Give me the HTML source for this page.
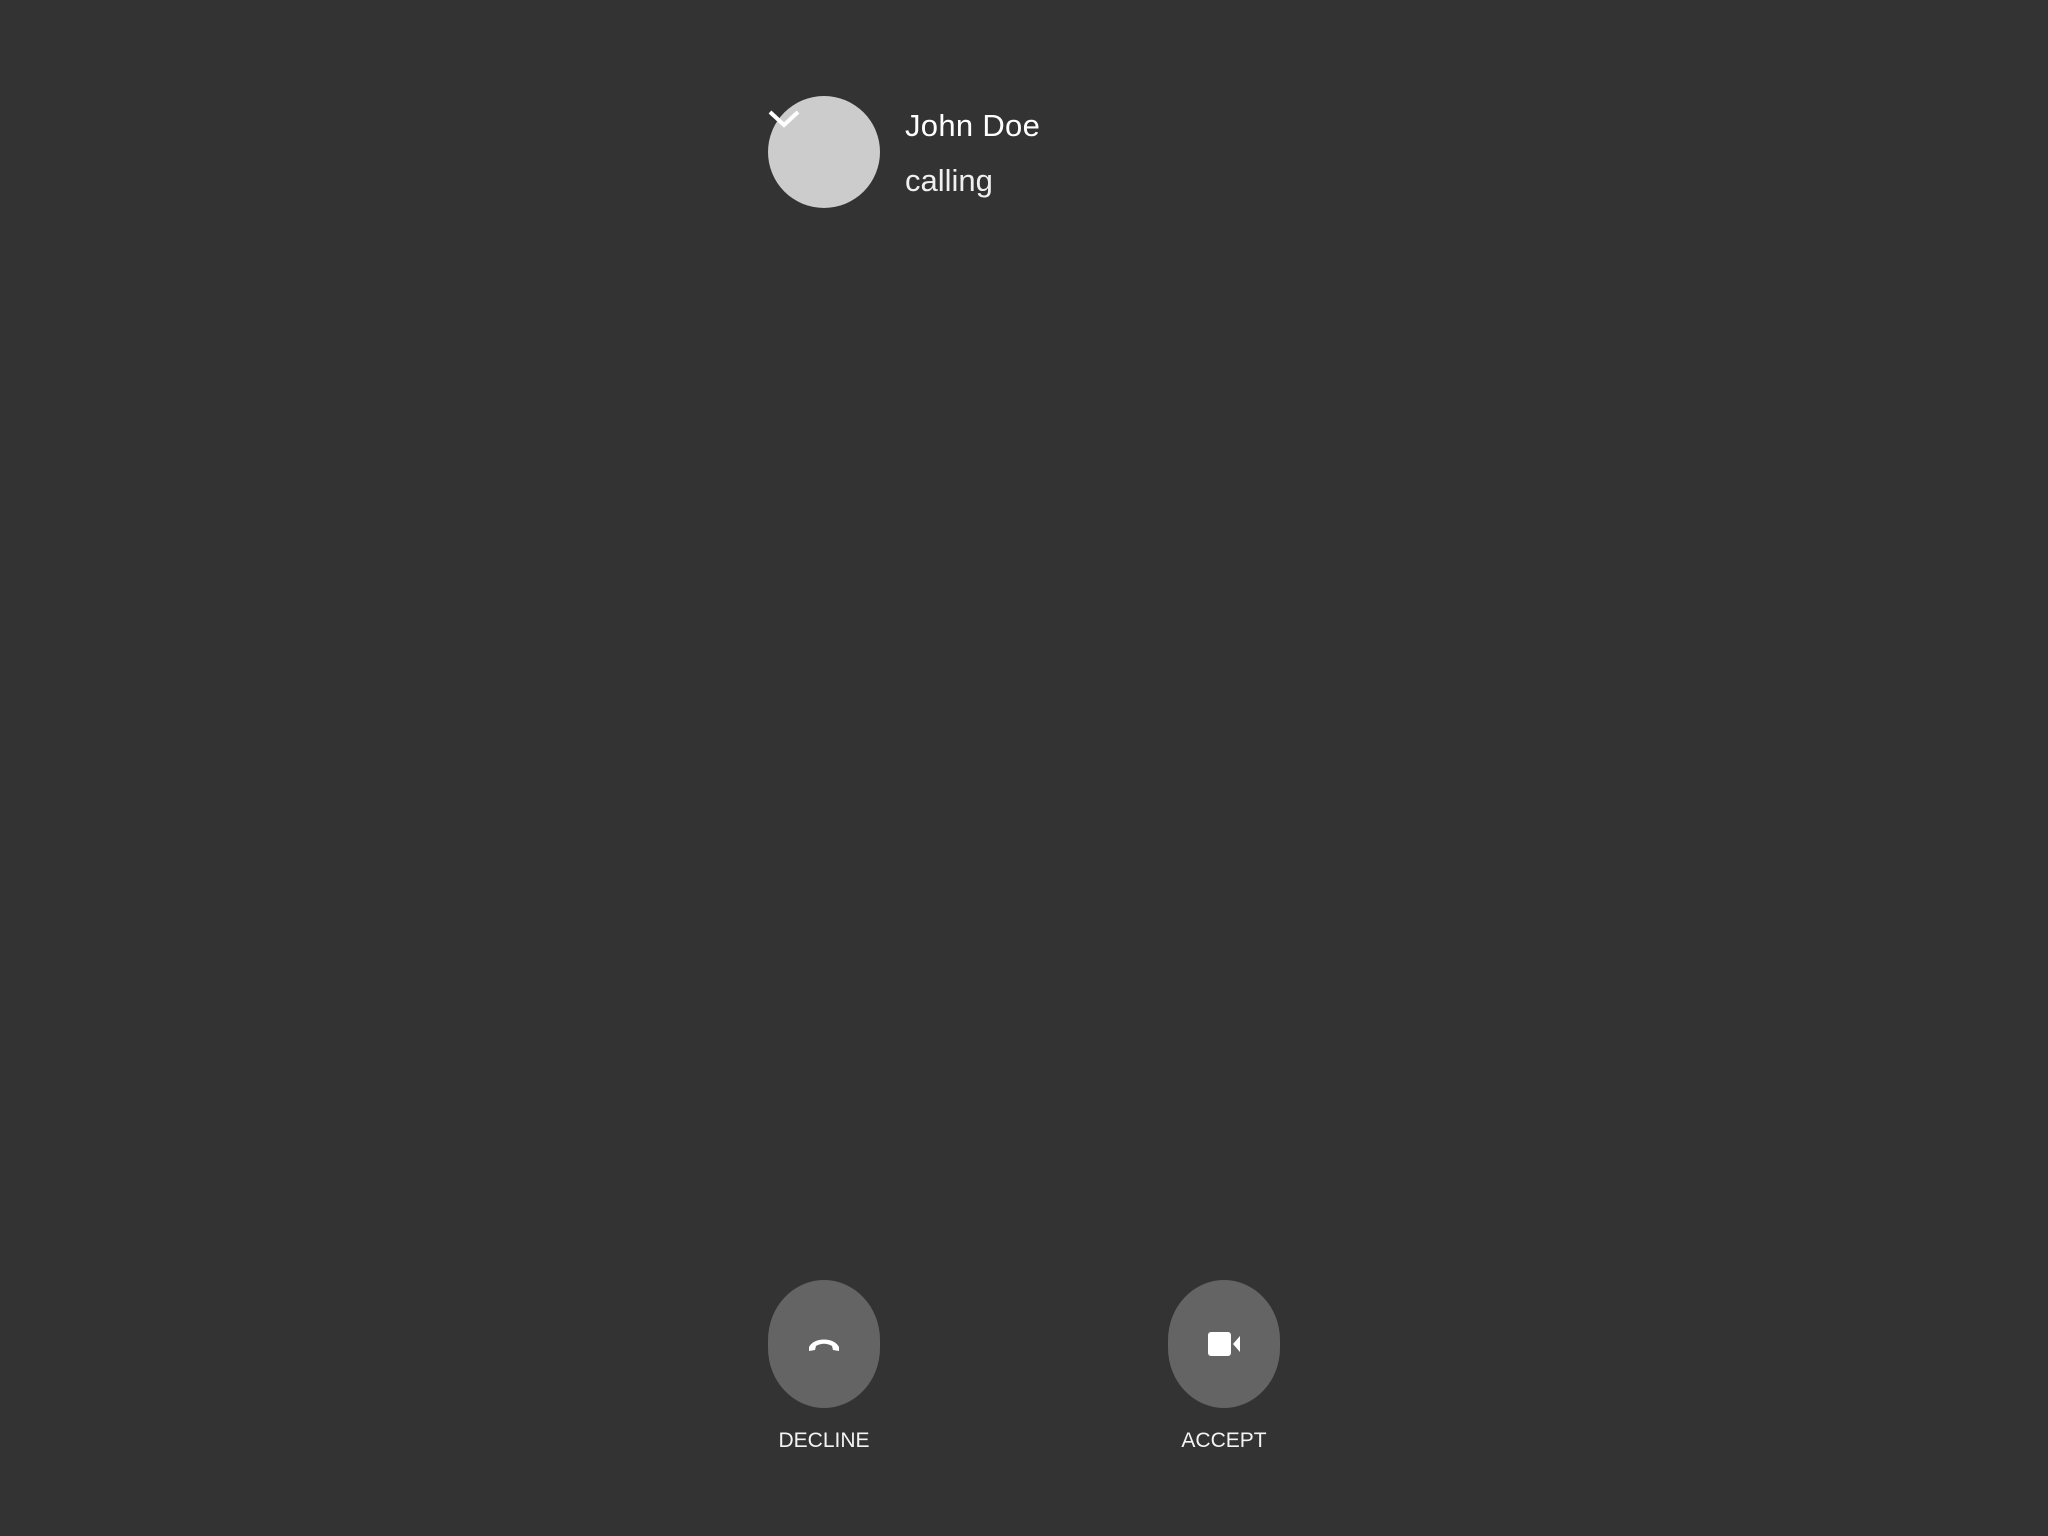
<!DOCTYPE html>
<html><head><meta charset="utf-8"><style>
html,body{margin:0;padding:0;background:#333333;width:2048px;height:1536px;overflow:hidden;font-family:"Liberation Sans",sans-serif;color:#fff}
.av{position:absolute;left:768px;top:96px;width:112px;height:112px;border-radius:50%;background:#cccccc}
.name{position:absolute;left:905px;top:106px;font-size:31px;line-height:40px;font-weight:500;letter-spacing:0.3px}
.status{position:absolute;left:905px;top:161px;font-size:31px;line-height:40px;font-weight:300;color:#f0f0f0}
.btn{position:absolute;top:1280px;width:112px;height:128px;border-radius:56px/60px;background:#646464}
.lbl{position:absolute;top:1428px;width:200px;text-align:center;font-size:21px;line-height:26px;color:#f4f4f4}
</style></head><body>
<div class="av"></div>
<svg style="position:absolute;left:0;top:0" width="2048" height="300"><polyline points="770,112 784,125 798,112" fill="none" stroke="#fff" stroke-width="4"/></svg>
<div class="name">John Doe</div>
<div class="status">calling</div>
<div class="btn" style="left:768px"></div>
<div class="btn" style="left:1168px"></div>
<svg style="position:absolute;left:0;top:1300px" width="2048" height="100">
<path d="M809,47 C814,37 834,37 839,47 L839,51 L833,50 L832,46 C827,43 821,43 816,46 L815,50 L809,51 Z" fill="#fff"/>
<rect x="1208" y="32" width="23" height="24" rx="3" fill="#fff"/>
<path d="M1233,44 L1240,36 L1240,52 Z" fill="#fff"/>
</svg>
<div class="lbl" style="left:724px">DECLINE</div>
<div class="lbl" style="left:1124px">ACCEPT</div>
</body></html>
